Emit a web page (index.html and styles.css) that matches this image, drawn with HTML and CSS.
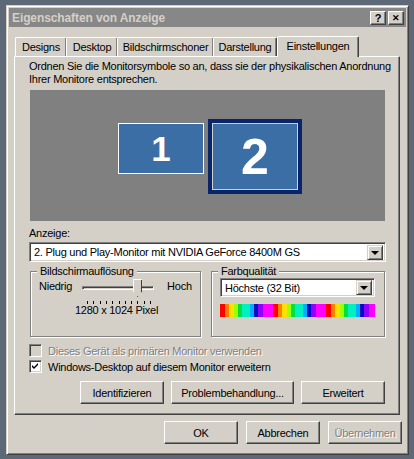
FILE: index.html
```html
<!DOCTYPE html>
<html>
<head>
  <title>Eigenschaften von Anzeige</title>
  <link rel="stylesheet" href="styles.css">
</head>
<body>
  <div class="window">
    <div class="titlebar">
      <span class="title">Eigenschaften von Anzeige</span>
      <span class="caption-btns">
        <span class="cbtn">?</span><span class="cbtn close">&#x2715;</span>
      </span>
    </div>

    <div class="tabs">
      <div class="tab t-designs">Designs</div>
      <div class="tab t-desktop">Desktop</div>
      <div class="tab t-saver">Bildschirmschoner</div>
      <div class="tab t-look">Darstellung</div>
      <div class="tab active">Einstellungen</div>
    </div>

    <div class="panel">
      <p class="hint">Ordnen Sie die Monitorsymbole so an, dass sie der physikalischen Anordnung<br>Ihrer Monitore entsprechen.</p>

      <div class="monitors">
        <div class="mon one">1</div>
        <div class="mon two"><div class="mon-inner">2</div></div>
      </div>

      <div class="label">Anzeige:</div>
      <div class="combo wide">
        <span class="combo-text">2. Plug und Play-Monitor mit NVIDIA GeForce 8400M GS</span>
        <span class="arrow"></span>
      </div>

      <div class="groups">
        <fieldset class="group res">
          <legend>Bildschirmauflösung</legend>
          <div class="slider-row">
            <span>Niedrig</span>
            <div class="slider">
              <div class="track"></div>
              <div class="thumb"></div>
              <div class="ticks">
                <i></i><i></i><i></i><i></i><i></i><i></i><i></i><i></i><i></i><i></i><i></i>
              </div>
            </div>
            <span>Hoch</span>
          </div>
          <div class="res-value">1280 x 1024 Pixel</div>
        </fieldset>

        <fieldset class="group color">
          <legend>Farbqualität</legend>
          <div class="combo small">
            <span class="combo-text">Höchste (32 Bit)</span>
            <span class="arrow"></span>
          </div>
          <div class="spectrum"></div>
        </fieldset>
      </div>

      <label class="check disabled"><span class="box"></span>Dieses Gerät als primären Monitor verwenden</label>
      <label class="check"><span class="box checked">
        <svg width="7" height="7" viewBox="0 0 7 7"><path d="M0 2 L2 4 L6 0 L6 2 L2 6 L0 4 Z" fill="#000"/></svg>
      </span>Windows-Desktop auf diesem Monitor erweitern</label>

      <div class="btn-row">
        <button class="btn b-ident">Identifizieren</button>
        <button class="btn b-trouble">Problembehandlung...</button>
        <button class="btn b-adv">Erweitert</button>
      </div>
    </div>

    <div class="dialog-btns">
      <button class="btn b-dlg">OK</button>
      <button class="btn b-dlg">Abbrechen</button>
      <button class="btn b-dlg disabled">Übernehmen</button>
    </div>
  </div>
</body>
</html>
```

FILE: styles.css
```css
body {
  margin: 0;
  height: 459px;
  overflow: hidden;
  background: #5d6977;
  font-family: "Liberation Sans", Arial, sans-serif;
  font-size: 11px;
  letter-spacing: -0.25px;
  color: #000;
}

.window {
  margin: 5px 0 0 6px;
  width: 403px;
  height: 450px;
  box-sizing: border-box;
  background: #d4d0c8;
  border: 1px solid;
  border-color: #d4d0c8 #404040 #404040 #d4d0c8;
  box-shadow: inset 1px 1px #fff, inset -1px -1px #808080;
  padding: 2px;
  display: flex;
  flex-direction: column;
}

.titlebar {
  height: 19px;
  background: #878787;
  display: flex;
  align-items: center;
  justify-content: space-between;
  padding: 0 2px 0 3px;
}

.title {
  color: #d4d0c8;
  font-weight: bold;
  font-size: 12px;
  letter-spacing: -0.1px;
}

.caption-btns {
  display: flex;
  gap: 2px;
}

.cbtn {
  width: 16px;
  height: 14px;
  box-sizing: border-box;
  background: #d4d0c8;
  border: 1px solid;
  border-color: #fff #404040 #404040 #fff;
  box-shadow: inset -1px -1px #808080;
  font-size: 11px;
  font-weight: bold;
  line-height: 12px;
  text-align: center;
  letter-spacing: 0;
}

.cbtn.close {
  font-size: 9px;
}

/* tab strip */
.tabs {
  display: flex;
  align-items: flex-end;
  margin: 7px 0 0 6px;
  height: 22px;
}

.tab {
  height: 19px;
  box-sizing: border-box;
  border: 1px solid;
  border-bottom: none;
  border-color: #fff #404040 transparent #fff;
  box-shadow: inset -1px 0 #808080;
  border-radius: 2px 2px 0 0;
  line-height: 18px;
  text-align: center;
  margin-right: -1px;
}

.t-designs { width: 52px; }
.t-desktop { width: 52px; }
.t-saver { width: 97px; }
.t-look { width: 64px; }

.tab.active {
  width: 82px;
  height: 21px;
  margin-left: 1px;
  position: relative;
  z-index: 1;
  background: #d4d0c8;
  margin-bottom: -1px;
}

.panel {
  margin: 0 6px 0 5px;
  height: 359px;
  box-sizing: border-box;
  border: 1px solid;
  border-color: #fff #404040 #404040 #fff;
  box-shadow: inset -1px -1px #808080;
  padding: 3px 14px 0 15px;
}

.hint {
  margin: 0 0 0 -1px;
  line-height: 13px;
  white-space: nowrap;
}

.monitors {
  margin-top: 4px;
  height: 131px;
  background: #808080;
  display: flex;
  align-items: flex-start;
  padding-left: 88px;
  gap: 4px;
  box-sizing: border-box;
}

.mon {
  background: #3a6ea5;
  color: #fff;
  font-weight: bold;
  display: flex;
  align-items: center;
  justify-content: center;
  box-sizing: border-box;
  letter-spacing: 0;
}

.mon.one {
  margin-top: 33px;
  width: 86px;
  height: 51px;
  border: 1px solid #fff;
  font-size: 35px;
}

.mon.two {
  margin-top: 29px;
  width: 94px;
  height: 75px;
  border: 4px solid #0a246a;
  background: #0a246a;
}

.mon-inner {
  width: 100%;
  height: 100%;
  box-sizing: border-box;
  border: 1px solid #d4d0c8;
  background: #3a6ea5;
  display: flex;
  align-items: center;
  justify-content: center;
  font-size: 50px;
}

.label {
  margin: 6px 0 0 -1px;
  line-height: 12px;
}

.combo {
  box-sizing: border-box;
  background: #fff;
  border: 1px solid;
  border-color: #808080 #fff #fff #808080;
  box-shadow: inset 1px 1px #404040, inset -1px -1px #d4d0c8;
  display: flex;
  align-items: center;
  justify-content: space-between;
  padding: 2px 2px 2px 4px;
}

.combo.wide {
  margin: 3px 0 0 -1px;
  width: 357px;
  height: 20px;
}

.combo.small {
  width: 155px;
  height: 19px;
}

.arrow {
  width: 16px;
  height: 15px;
  box-sizing: border-box;
  background: #d4d0c8;
  border: 1px solid;
  border-color: #d4d0c8 #404040 #404040 #d4d0c8;
  box-shadow: inset 1px 1px #fff, inset -1px -1px #808080;
  display: flex;
  align-items: center;
  justify-content: center;
}

.arrow::after {
  content: "";
  border-left: 4px solid transparent;
  border-right: 4px solid transparent;
  border-top: 4px solid #000;
  margin-top: 1px;
}

/* group boxes */
.groups {
  display: flex;
  gap: 10px;
  margin-top: 3px;
}

.group {
  margin: 0;
  border: 1px solid #808080;
  box-shadow: 1px 1px 0 #fff, inset 1px 1px 0 #fff;
  padding: 0 8px;
  height: 72px;
  box-sizing: border-box;
}

.group legend {
  padding: 0 3px;
  margin-left: -2px;
  line-height: 13px;
  background: #d4d0c8;
}

.group.res {
  width: 171px;
}

.group.color {
  width: 174px;
}

.slider-row {
  display: flex;
  align-items: flex-start;
  margin-top: 2px;
}

.slider {
  width: 72px;
  height: 24px;
  margin: 0 13px 0 10px;
  position: relative;
}

.track {
  margin-top: 6px;
  height: 2px;
  border-top: 1px solid #808080;
  border-left: 1px solid #808080;
  border-bottom: 1px solid #fff;
  border-right: 1px solid #fff;
  box-shadow: inset 1px 1px #404040;
}

.thumb {
  position: absolute;
  left: 51px;
  top: -1px;
  width: 9px;
  height: 18px;
  background: #d4d0c8;
  clip-path: polygon(0 0, 100% 0, 100% 70%, 50% 100%, 0 70%);
  box-shadow: inset 1px 1px #fff, inset -1px -1px #404040;
}

.ticks {
  display: flex;
  justify-content: space-between;
  margin: 11px 3px 0 5px;
}

.ticks i {
  width: 1px;
  height: 3px;
  background: #000;
}

.res-value {
  text-align: center;
  padding-left: 2px;
}

.spectrum {
  margin-top: 7px;
  width: 155px;
  height: 13px;
  background: repeating-linear-gradient(90deg,
    #f00 0, #f00 5px, #ff8000 5px, #ff8000 9px, #ffe000 9px, #ffe000 14px,
    #a0ff00 14px, #a0ff00 18px, #00e040 18px, #00e040 22px,
    #00f0c0 22px, #00f0c0 30px, #00b0ff 30px, #00b0ff 34px,
    #0010c0 34px, #0010c0 38px, #9000ff 38px, #9000ff 43px,
    #f0f 43px, #f0f 53px);
}

/* checkboxes */
.check {
  display: flex;
  align-items: center;
  gap: 6px;
  margin-left: -1px;
  height: 13px;
}

.check:first-of-type {
  margin-top: 7px;
}

.check + .check {
  margin-top: 3px;
}

.check.disabled {
  color: #808080;
  text-shadow: 1px 1px #fff;
}

.box {
  width: 13px;
  height: 13px;
  box-sizing: border-box;
  background: #fff;
  border: 1px solid;
  border-color: #808080 #fff #fff #808080;
  box-shadow: inset 1px 1px #404040, inset -1px -1px #d4d0c8;
  display: flex;
  align-items: center;
  justify-content: center;
}

.check.disabled .box {
  background: #d4d0c8;
}

/* push buttons */
.btn {
  font-family: inherit;
  font-size: 11px;
  letter-spacing: -0.25px;
  color: #000;
  background: #d4d0c8;
  height: 23px;
  padding: 0;
  border: 1px solid;
  border-color: #fff #404040 #404040 #fff;
  box-shadow: inset -1px -1px #808080;
}

.btn.disabled {
  color: #808080;
  text-shadow: 1px 1px #fff;
}

.btn-row {
  display: flex;
  justify-content: flex-end;
  gap: 7px;
  margin-top: 8px;
}

.b-ident {
  width: 84px;
}

.b-trouble {
  width: 123px;
}

.b-adv {
  width: 84px;
}

.dialog-btns {
  display: flex;
  justify-content: flex-end;
  gap: 8px;
  margin: 6px 4px 0 0;
}

.b-dlg {
  width: 74px;
}
```
